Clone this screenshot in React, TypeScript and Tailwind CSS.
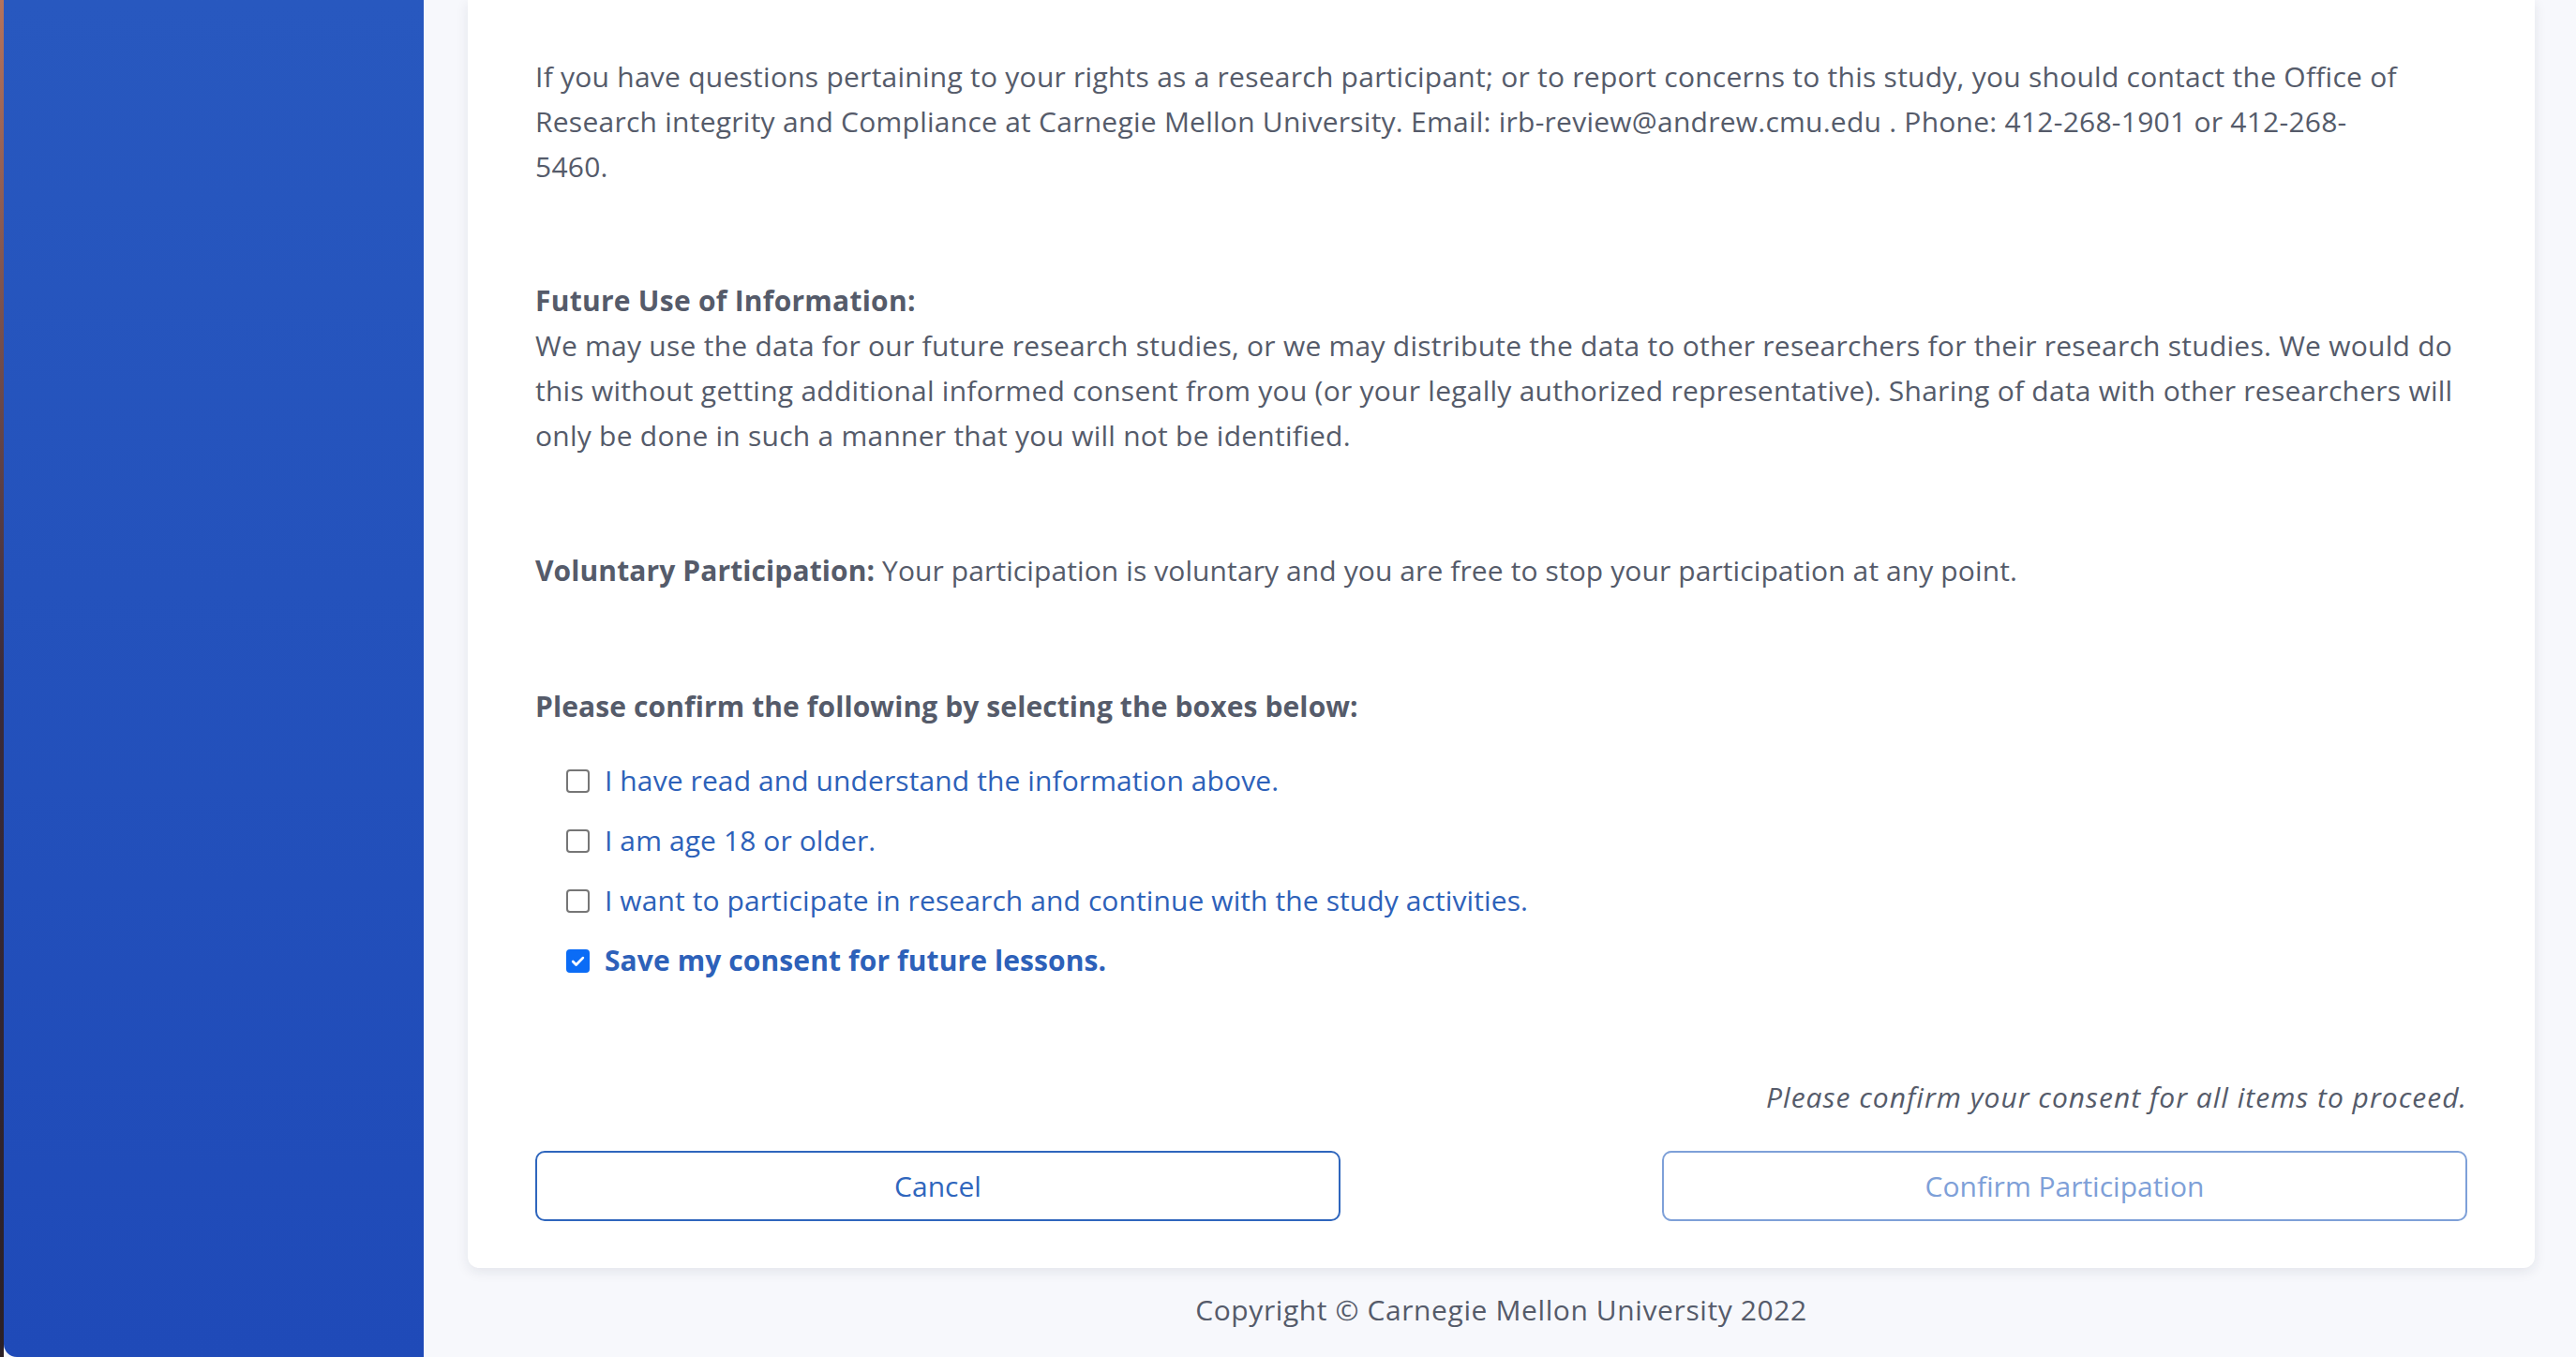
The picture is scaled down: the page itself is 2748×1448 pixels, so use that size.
import React from "react";

const font = { fontFamily: '"Open Sans", "Noto Sans", sans-serif' };

function Box({ checked }: { checked?: boolean }) {
  if (checked) {
    return (
      <span className="flex h-[25px] w-[25px] shrink-0 items-center justify-center rounded-[4px] bg-[#0b6cf6]">
        <svg width="17" height="17" viewBox="0 0 16 16" fill="none">
          <path d="M3 8.5l3.2 3.2L13 4.8" stroke="white" strokeWidth="2.6" strokeLinecap="round" strokeLinejoin="round" />
        </svg>
      </span>
    );
  }
  return <span className="h-[25px] w-[25px] shrink-0 rounded-[4px] border-[2px] border-[#767676] bg-white" />;
}

function Item({ label, checked }: { label: string; checked?: boolean }) {
  return (
    <label className="flex h-[48px] items-center gap-[16px] pl-[33px]">
      <Box checked={checked} />
      <span className={checked ? "font-bold text-[#2d61b9]" : "text-[#2d61b9]"}>{label}</span>
    </label>
  );
}

export default function App() {
  return (
    <div
      className="flex h-[1448px] w-[2748px] overflow-hidden bg-[#f7f8fc] text-[30px] leading-[48px] text-[#555b6a]"
      style={font}
    >
      <div className="w-[4px] shrink-0 bg-gradient-to-b from-[#b5735c] via-[#3b2b3a] to-[#2b2026]" />
      <aside className="w-[448px] shrink-0 rounded-bl-[14px] bg-gradient-to-b from-[#2858bf] to-[#1f4ab8]" />
      <main className="flex flex-1 flex-col pl-[47px] pr-[44px]">
        <div className="rounded-b-[12px] bg-white px-[72px] pb-[50px] pt-[58px] shadow-[0_4px_14px_rgba(20,30,60,0.09)]">
          <p className="tracking-[0.25px]">
            If you have questions pertaining to your rights as a research participant; or to report concerns to this
            study, you should contact the Office of Research integrity and Compliance at Carnegie Mellon University.
            Email: irb-review@andrew.cmu.edu . Phone: 412-268-1901 or 412-268-
            <br />
            5460.
          </p>

          <div className="mt-[95px] tracking-[0.25px]">
            <p className="font-bold">Future Use of Information:</p>
            <p>
              We may use the data for our future research studies, or we may distribute the data to other researchers
              for their research studies. We would do this without getting additional informed consent from you (or
              your legally authorized representative). Sharing of data with other researchers will only be done in such
              a manner that you will not be identified.
            </p>
          </div>

          <p className="mt-[96px] tracking-[0.1px]">
            <span className="font-bold">Voluntary Participation:</span> Your participation is voluntary and you are
            free to stop your participation at any point.
          </p>

          <p className="mt-[97px] font-bold tracking-[0.1px]">
            Please confirm the following by selecting the boxes below:
          </p>

          <div className="mt-[31px] flex flex-col gap-[16px] tracking-[0.1px]">
            <Item label="I have read and understand the information above." />
            <Item label="I am age 18 or older." />
            <Item label="I want to participate in research and continue with the study activities." />
            <Item label="Save my consent for future lessons." checked />
          </div>

          <p className="mt-[98px] text-right italic tracking-[1px]">
            Please confirm your consent for all items to proceed.
          </p>

          <div className="mt-[33px] flex justify-between">
            <button className="h-[75px] w-[859px] rounded-[10px] border-[2px] border-[#2f66bd] bg-white text-[#2f66bd]">
              Cancel
            </button>
            <button className="h-[75px] w-[859px] rounded-[10px] border-[2px] border-[#7ea0d8] bg-white text-[#7ea0d8]">
              Confirm Participation
            </button>
          </div>
        </div>
        <footer className="mt-[21px] text-center tracking-[0.6px]">Copyright © Carnegie Mellon University 2022</footer>
      </main>
    </div>
  );
}
